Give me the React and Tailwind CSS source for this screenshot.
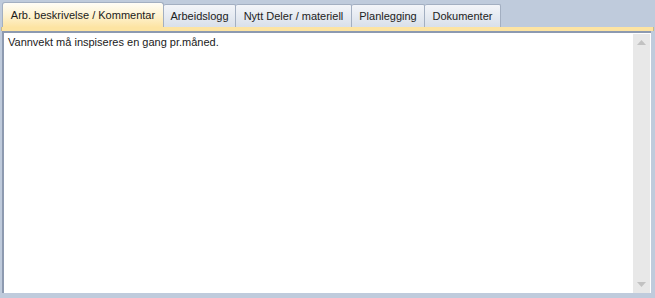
export default function App() {
  const tabs = [
    { label: "Arbeidslogg", w: "w-[72px]" },
    { label: "Nytt Deler / materiell", w: "w-[116px]" },
    { label: "Planlegging", w: "w-[73px]" },
    { label: "Dokumenter", w: "w-[76px]" },
  ];
  return (
    <div className="w-[655px] h-[298px] bg-[#bfcbdc] flex flex-col pl-px pr-px pb-[5px] text-[11px] text-[#1a1a1a]" style={{ fontFamily: '"Liberation Sans", Arial, sans-serif' }}>
      <div className="flex items-end h-[27px] pl-px">
        <div className="h-[25px] w-[162px] flex items-center justify-center border border-b-0 border-[#a3afc1] rounded-t-[3px] bg-gradient-to-b from-[#fffdf6] via-[#fef3d2] to-[#fde4a4] text-[11px] pt-[1px]">
          Arb. beskrivelse / Kommentar
        </div>
        {tabs.map((t) => (
          <div key={t.label} className={`h-[23px] ${t.w} flex items-center justify-center border border-l-0 border-b-0 border-[#a3afc1] rounded-t-[2px] bg-gradient-to-b from-[#f3f5f9] to-[#d9e0ea] text-[11px] text-[#222]`}>
            {t.label}
          </div>
        ))}
      </div>
      <div className="h-[4px] bg-[#fde4a2] border-x border-[#c9b88a]" />
      <div className="flex-1 flex border-t-2 border-l-2 border-[#8d9ab0] bg-white mr-[3px] ml-px">
        <div className="flex-1 px-[4px] pt-px text-[11px]">Vannvekt må inspiseres en gang pr.måned.</div>
        <div className="w-[17px] bg-[#e8e8e8] flex flex-col justify-between items-center py-[6px] mt-px">
          <svg width="9" height="5" viewBox="0 0 9 5"><path d="M0 5 L4.5 0 L9 5 Z" fill="#c2c2c2" /></svg>
          <svg width="9" height="5" viewBox="0 0 9 5"><path d="M0 0 L4.5 5 L9 0 Z" fill="#c2c2c2" /></svg>
        </div>
        <div className="w-[1px]" />
      </div>
    </div>
  );
}
